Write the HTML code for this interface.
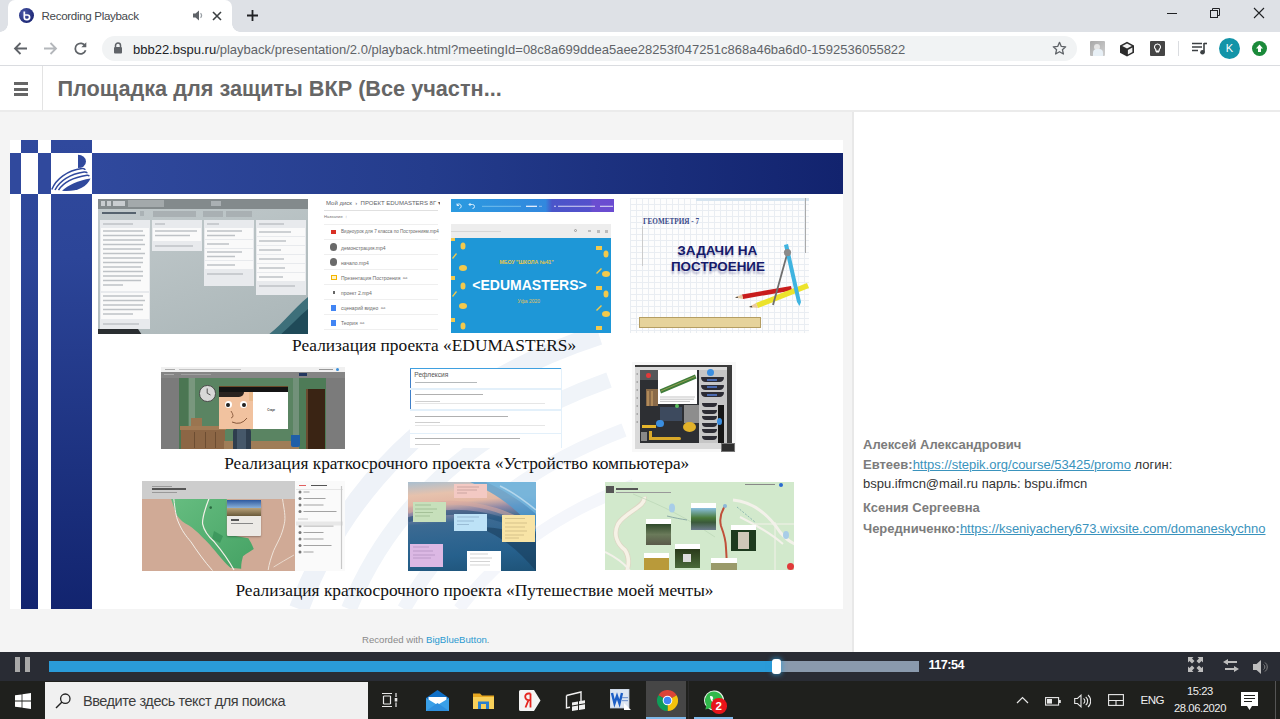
<!DOCTYPE html>
<html><head><meta charset="utf-8">
<style>
*{margin:0;padding:0;box-sizing:border-box}
html,body{width:1280px;height:719px;overflow:hidden;background:#fff;font-family:"Liberation Sans",sans-serif}
.a{position:absolute}
.t{position:absolute;white-space:nowrap;line-height:1}
</style></head><body>
<!-- TAB BAR -->
<div class="a" style="left:0;top:0;width:1280px;height:32px;background:#dee1e6"></div>
<div class="a" style="left:8px;top:0;width:224px;height:32px;background:#fff;border-radius:7px 7px 0 0"></div>
<div class="a" style="left:0;top:24px;width:8px;height:8px;background:radial-gradient(circle at 0 0,#dee1e6 7.5px,#fff 8px)"></div>
<div class="a" style="left:232px;top:24px;width:8px;height:8px;background:radial-gradient(circle at 100% 0,#dee1e6 7.5px,#fff 8px)"></div>
<!-- favicon -->
<div class="a" style="left:18.5px;top:7.8px;width:15px;height:15px;border-radius:50%;background:radial-gradient(circle at 35% 35%,#4a58a8,#1f2a78 70%)"></div>
<svg class="a" style="left:18.5px;top:7.8px" width="15" height="15" viewBox="0 0 15 15"><path d="M5.3 3.6V9.4a2.2 2.2 0 0 0 2.2 2.2h0.8a2.2 2.2 0 0 0 0-4.6H6" fill="none" stroke="#fff" stroke-width="1.7"/></svg>
<div class="t" style="left:41.5px;top:10.2px;font-size:11.6px;letter-spacing:-0.33px;color:#45484c">Recording Playback</div>
<!-- speaker -->
<svg class="a" style="left:192px;top:10px" width="12" height="11" viewBox="0 0 12 11"><path d="M1 3.5h2.5L7 0.5v10L3.5 7.5H1z" fill="#5f6368"/><path d="M8.5 3.2a3 3 0 0 1 0 4.6" stroke="#9aa0a6" stroke-width="1.3" fill="none"/></svg>
<!-- close -->
<svg class="a" style="left:212px;top:11px" width="10" height="10" viewBox="0 0 10 10"><path d="M1 1L9 9M9 1L1 9" stroke="#3c4043" stroke-width="1.6"/></svg>
<!-- plus -->
<svg class="a" style="left:246px;top:9px" width="13" height="13" viewBox="0 0 13 13"><path d="M6.5 1v11M1 6.5h11" stroke="#202124" stroke-width="1.8"/></svg>
<!-- window controls -->
<div class="a" style="left:1167px;top:13px;width:10px;height:1px;background:#202124"></div>
<svg class="a" style="left:1209px;top:7px" width="12" height="12" viewBox="0 0 12 12"><rect x="1.5" y="3.5" width="7" height="7" fill="none" stroke="#202124"/><path d="M3.5 3.5V1.5h7v7h-2" fill="none" stroke="#202124"/></svg>
<svg class="a" style="left:1253px;top:7px" width="12" height="12" viewBox="0 0 12 12"><path d="M1 1L11 11M11 1L1 11" stroke="#202124" stroke-width="1.1"/></svg>

<!-- TOOLBAR -->
<div class="a" style="left:0;top:32px;width:1280px;height:34px;background:#fff"></div>
<div class="a" style="left:0;top:65px;width:1280px;height:1px;background:#dadce0"></div>
<svg class="a" style="left:13px;top:41px" width="15" height="15" viewBox="0 0 15 15"><path d="M14 7.5H2M7.5 2L2 7.5L7.5 13" fill="none" stroke="#5f6368" stroke-width="1.8"/></svg>
<svg class="a" style="left:43px;top:41px" width="15" height="15" viewBox="0 0 15 15"><path d="M1 7.5H13M7.5 2L13 7.5L7.5 13" fill="none" stroke="#b4b7bb" stroke-width="1.8"/></svg>
<svg class="a" style="left:73px;top:41px" width="15" height="15" viewBox="0 0 15 15"><path d="M12.3 5.2A5.3 5.3 0 1 0 12.6 9.3" fill="none" stroke="#5f6368" stroke-width="1.8"/><path d="M13.3 1.2V6.2H8.3z" fill="#5f6368"/></svg>
<div class="a" style="left:102px;top:36px;width:975px;height:25px;border-radius:13px;background:#f1f3f4"></div>
<svg class="a" style="left:113px;top:42px" width="10" height="12" viewBox="0 0 10 12"><path d="M2.5 5V3.5a2.5 2.5 0 0 1 5 0V5" fill="none" stroke="#5f6368" stroke-width="1.5"/><rect x="1" y="5" width="8" height="6.5" rx="1" fill="#5f6368"/></svg>
<div class="t" style="left:133px;top:42.6px;font-size:13px;color:#202124">bbb22.bspu.ru<span style="color:#5f6368">/playback/presentation/2.0/playback.html?meetingId=08c8a699ddea5aee28253f047251c868a46ba6d0-1592536055822</span></div>
<svg class="a" style="left:1052px;top:41px" width="15" height="15" viewBox="0 0 15 15"><path d="M7.5 1.3l1.8 4.1 4.4 0.4-3.3 2.9 1 4.3-3.9-2.3-3.9 2.3 1-4.3-3.3-2.9 4.4-0.4z" fill="none" stroke="#5f6368" stroke-width="1.3" stroke-linejoin="round"/></svg>
<!-- extensions -->
<div class="a" style="left:1090px;top:41px;width:15px;height:15px;background:linear-gradient(135deg,#a8a8a8,#d0d0d0);border-radius:1px;overflow:hidden"><div class="a" style="left:4px;top:2.5px;width:6px;height:6px;border-radius:50%;background:#e6e6e6"></div><div class="a" style="left:3px;top:8px;width:10px;height:9px;border-radius:4px 4px 0 0;background:#e8f0f6"></div></div>
<svg class="a" style="left:1119px;top:41px" width="16" height="16" viewBox="0 0 16 16"><path d="M8 0.8L15 4.5V11.8L8 15.5L1 11.8V4.5z" fill="#2b2b2b"/><path d="M8 2.6L12.8 5L8 7.4L3.2 5z" fill="#f2f2f2"/><path d="M8.9 8.9L13.4 6.6V11L8.9 13.4z" fill="#f2f2f2"/></svg>
<div class="a" style="left:1150px;top:41px;width:15px;height:15px;background:#454545;border-radius:1px"></div>
<svg class="a" style="left:1150px;top:41px" width="15" height="15" viewBox="0 0 15 15"><path d="M7.5 3a3 3 0 0 1 1.7 5.5V10H5.8V8.5A3 3 0 0 1 7.5 3z M6 11h3" fill="none" stroke="#fff" stroke-width="1.1"/></svg>
<div class="a" style="left:1178px;top:41px;width:1px;height:15px;background:#dadce0"></div>
<svg class="a" style="left:1192px;top:42px" width="16" height="13" viewBox="0 0 16 13"><path d="M0 1.5h10M0 5h10M0 8.5h6" stroke="#3c4043" stroke-width="1.6"/><path d="M12 1v9" stroke="#3c4043" stroke-width="1.6"/><path d="M12 1.5h3" stroke="#3c4043" stroke-width="1.6"/><circle cx="10.5" cy="10.3" r="2.3" fill="#3c4043"/></svg>
<div class="a" style="left:1219px;top:38px;width:21px;height:21px;border-radius:50%;background:#1394a8"></div>
<div class="t" style="left:1219px;top:43px;width:21px;text-align:center;font-size:11px;color:#fff">K</div>
<div class="a" style="left:1252px;top:41px;width:15px;height:15px;border-radius:50%;background:#1b8a3a"></div>
<svg class="a" style="left:1252px;top:41px" width="15" height="15" viewBox="0 0 15 15"><path d="M7.5 3.5L11 7.5H9V11H6V7.5H4z" fill="#fff"/></svg>

<!-- BBB HEADER -->
<div class="a" style="left:0;top:66px;width:1280px;height:44px;background:#fff"></div>
<div class="a" style="left:0;top:110px;width:1280px;height:2px;background:#ebebeb"></div>
<div class="a" style="left:42px;top:66px;width:1px;height:44px;background:#e3e3e3"></div>
<div class="a" style="left:14px;top:82px;width:14px;height:3px;background:#666"></div>
<div class="a" style="left:14px;top:87.5px;width:14px;height:3px;background:#666"></div>
<div class="a" style="left:14px;top:93px;width:14px;height:3px;background:#666"></div>
<div class="t" style="left:57.5px;top:78px;font-size:21.7px;font-weight:bold;color:#666">Площадка для защиты ВКР (Все участн...</div>

<!-- CONTENT -->
<div class="a" style="left:0;top:112px;width:853px;height:540px;background:#f4f4f4"></div>
<div class="a" style="left:852px;top:112px;width:2px;height:540px;background:#e8e8e8"></div>
<div class="a" style="left:854px;top:112px;width:426px;height:540px;background:#fff"></div>

<!-- SLIDE -->
<div class="a" style="left:9.5px;top:140px;width:833px;height:469px;background:#fff"></div>
<!-- faint watermark swoosh -->
<svg class="a" style="left:9px;top:140px" width="834" height="469" viewBox="0 0 834 469">
<g fill="none">
<path d="M290 469 C 330 360, 420 250, 590 195" stroke="#eef2f8" stroke-width="20"/>
<path d="M340 469 C 380 370, 460 290, 600 240" stroke="#f0f4f9" stroke-width="16"/>
<path d="M395 469 C 440 390, 510 330, 615 290" stroke="#f2f5fa" stroke-width="14"/>
<path d="M450 469 C 495 410, 555 370, 625 345" stroke="#f4f6fb" stroke-width="12"/>
</g>
</svg>
<!-- blue band -->
<div class="a" style="left:91px;top:152.5px;width:751.5px;height:41px;background:linear-gradient(to right,#30499d,#243c8c 45%,#12236e)"></div>
<div class="a" style="left:9.5px;top:152.5px;width:11.5px;height:41px;background:#30499d"></div>
<div class="a" style="left:38px;top:152.5px;width:12.5px;height:41px;background:#30499d"></div>
<!-- columns -->
<div class="a" style="left:21px;top:140px;width:17px;height:469px;background:linear-gradient(to bottom,#30499d,#2c4598 25%,#12246f)"></div>
<div class="a" style="left:50.5px;top:140px;width:41px;height:469px;background:linear-gradient(to bottom,#30499d,#2c4598 25%,#12246f)"></div>
<div class="a" style="left:21px;top:152.5px;width:17px;height:41px;background:#fff"></div>
<div class="a" style="left:50.5px;top:152.5px;width:41px;height:41px;background:#fff"></div>
<!-- logo -->
<svg class="a" style="left:50px;top:152px" width="42" height="42" viewBox="0 0 42 42">
<path d="M28 2.7 A8 6.7 0 0 1 28 16.1 Z" fill="#30499d"/>
<path d="M1.8 37.5 C 6 27, 17 18.5, 32 16.5 C 34 16.3, 35 17, 35 18" fill="none" stroke="#30499d" stroke-width="1.5"/>
<path d="M5 38 C 9.5 29, 20 22, 34 20 C 36 19.8, 37 20.5, 37 21.3" fill="none" stroke="#30499d" stroke-width="1.5"/>
<path d="M8.5 38.2 C 13 31, 23 25.5, 37 23.3 C 38.5 23.1, 39 23.5, 39.2 24.3" fill="none" stroke="#30499d" stroke-width="1.5"/>
<path d="M12 38.8 C 18 33, 28 28.5, 40.5 26.5 C 37 35.5, 26 40, 12 38.8 Z" fill="#30499d"/>
</svg>
<!-- IMG1 trello -->
<div class="a" style="left:98px;top:198.5px;width:210px;height:135.5px;background:linear-gradient(160deg,#c3cbcd,#b4bec0 60%,#aab6b8);overflow:hidden">
 <div class="a" style="left:0;top:0;width:210px;height:10px;background:#838a8c"></div>
 <div class="a" style="left:3px;top:2.5px;width:4px;height:5px;background:#c9cdd0"></div>
 <div class="a" style="left:9px;top:2.5px;width:4px;height:5px;background:#c9cdd0"></div>
 <div class="a" style="left:15px;top:2.5px;width:12px;height:5px;background:#c9cdd0"></div>
 <div class="a" style="left:30px;top:1.2px;width:36px;height:7.5px;background:#a3a9ab"></div>
 <div class="a" style="left:113px;top:2.5px;width:10px;height:5px;background:#aab0b3"></div>
 <div class="a" style="left:4px;top:13.8px;width:34px;height:2.2px;background:#56636f"></div>
 <div class="a" style="left:42px;top:12.5px;width:4px;height:5px;background:#aab2b5"></div>
 <div class="a" style="left:55px;top:12px;width:43px;height:6px;background:#a9b0b3"></div>
 <div class="a" style="left:105px;top:12px;width:20px;height:6px;background:#a9b0b3"></div>
 <div class="a" style="left:128px;top:12px;width:26px;height:6px;background:#a9b0b3"></div>
 <!-- lists -->
 <div class="a" style="left:1.5px;top:21.5px;width:50px;height:108.5px;background:#e8eaed"></div>
 <div class="a" style="left:2.5px;top:29px;width:48px;height:63px;background:#fafafa"></div>
 <div class="a" style="left:2.5px;top:94px;width:48px;height:26px;background:#fafafa"></div>
 <div class="a" style="left:53.5px;top:21.5px;width:50px;height:31px;background:#e8eaed"></div>
 <div class="a" style="left:54.5px;top:29px;width:48px;height:13px;background:#fafafa"></div>
 <div class="a" style="left:105.5px;top:21.5px;width:50px;height:66px;background:#e8eaed"></div>
 <div class="a" style="left:106.5px;top:29px;width:48px;height:11px;background:#fafafa"></div>
 <div class="a" style="left:106.5px;top:41px;width:48px;height:8px;background:#fafafa"></div>
 <div class="a" style="left:106.5px;top:50px;width:48px;height:11px;background:#fafafa"></div>
 <div class="a" style="left:106.5px;top:62px;width:48px;height:8px;background:#fafafa"></div>
 <div class="a" style="left:157.5px;top:21.5px;width:50px;height:75px;background:#e8eaed"></div>
 <div class="a" style="left:158.5px;top:29px;width:48px;height:8px;background:#fafafa"></div>
 <div class="a" style="left:158.5px;top:38px;width:48px;height:8px;background:#fafafa"></div>
 <div class="a" style="left:158.5px;top:47px;width:48px;height:8px;background:#fafafa"></div>
 <div class="a" style="left:158.5px;top:56px;width:48px;height:8px;background:#fafafa"></div>
 <div class="a" style="left:158.5px;top:65px;width:48px;height:8px;background:#fafafa"></div>
 <div class="a" style="left:158.5px;top:74px;width:48px;height:8px;background:#fafafa"></div>
 <!-- text hint lines -->
 <svg class="a" style="left:0;top:0" width="210" height="136" viewBox="0 0 210 136">
  <g stroke="#bec2c6" stroke-width="1.5">
   <path d="M5 25h30M5 32h40M5 36.5h42M5 41h40M5 45.5h42M5 50h38M5 54.5h42M5 59h40M5 63.5h40M5 68h38M5 72.5h40M5 77h40M5 81.5h38M5 86h20"/>
   <path d="M5 97h40M5 101.5h42M5 106h40M5 110.5h40M5 115h30M5 125h36"/>
   <path d="M57 25h10M57 32h42M57 36.5h35M57 47h38"/>
   <path d="M109 25h12M109 32h35M109 36.5h28M109 45h22M109 53h35M109 57.5h28M109 66h28M109 75h36"/>
   <path d="M161 25h25M161 33h32M161 42h27M161 51h22M161 60h25M161 69h26M161 78h24M161 87h36"/>
  </g>
 </svg>
 <!-- mountain -->
 <svg class="a" style="left:0;top:0" width="210" height="136" viewBox="0 0 210 136">
  <path d="M170 136 C 185 125, 195 110, 210 98 V136z" fill="#3d6f7a"/>
  <path d="M182 136 C 192 128, 200 118, 210 110 V136z" fill="#1f4a58"/>
  <path d="M0 130 H40 L44 136 H0z" fill="#2a2e31"/>
 </svg>
</div>

<!-- IMG2 drive -->
<div class="a" style="left:320px;top:198px;width:120px;height:136px;overflow:hidden">
 <div class="t" style="left:6px;top:1.5px;font-size:6px;color:#5f6368">Мой диск &nbsp;›&nbsp; ПРОЕКТ EDUMASTERS 8Г ▾</div>
 <div class="a" style="left:4px;top:11.5px;width:114px;height:0.6px;background:#e0e0e0"></div>
 <div class="t" style="left:4px;top:17px;font-size:4.2px;color:#777">Название &nbsp;↑</div>
 <div class="a" style="left:4px;top:26px;width:114px;height:0.6px;background:#efefef"></div>
 <div class="a" style="left:11px;top:31.5px;width:5px;height:4px;background:#d93025"></div>
 <div class="t" style="left:21px;top:32.3px;font-size:4.6px;color:#6a6a6a">Видеоурок для 7 класса по Построениям.mp4</div>
 <div class="a" style="left:4px;top:41px;width:114px;height:0.6px;background:#efefef"></div>
 <div class="a" style="left:9.5px;top:45px;width:7.5px;height:7.5px;border-radius:50%;background:#6a6a6a"></div>
 <div class="t" style="left:21px;top:47.5px;font-size:5px;color:#6a6a6a">демонстрация.mp4</div>
 <div class="a" style="left:4px;top:56px;width:114px;height:0.6px;background:#efefef"></div>
 <div class="a" style="left:9.5px;top:60px;width:7.5px;height:7.5px;border-radius:50%;background:#6a6a6a"></div>
 <div class="t" style="left:21px;top:62.5px;font-size:5px;color:#6a6a6a">начало.mp4</div>
 <div class="a" style="left:4px;top:71px;width:114px;height:0.6px;background:#efefef"></div>
 <div class="a" style="left:11px;top:77px;width:6px;height:5px;border:1px solid #f4b400;background:#fff3c4"></div>
 <div class="t" style="left:21px;top:77.5px;font-size:5px;color:#6a6a6a">Презентация Построения &nbsp;⚯</div>
 <div class="a" style="left:4px;top:86px;width:114px;height:0.6px;background:#efefef"></div>
 <div class="a" style="left:13px;top:93px;width:2px;height:3px;background:#666"></div>
 <div class="t" style="left:21px;top:92.5px;font-size:5px;color:#6a6a6a">проект 2.mp4</div>
 <div class="a" style="left:4px;top:101px;width:114px;height:0.6px;background:#efefef"></div>
 <div class="a" style="left:11px;top:107px;width:5px;height:6px;background:#4285f4"></div>
 <div class="t" style="left:21px;top:107.5px;font-size:5px;color:#6a6a6a">сценарий видео &nbsp;⚯</div>
 <div class="a" style="left:4px;top:116px;width:114px;height:0.6px;background:#efefef"></div>
 <div class="a" style="left:11px;top:122px;width:5px;height:6px;background:#4285f4"></div>
 <div class="t" style="left:21px;top:122.5px;font-size:5px;color:#6a6a6a">Теория &nbsp;⚯</div>
 <div class="a" style="left:4px;top:131px;width:114px;height:0.6px;background:#efefef"></div>
</div>
<!-- IMG3 canva -->
<div class="a" style="left:450.5px;top:198.8px;width:163px;height:13.7px;background:linear-gradient(to right,#2b9be0,#3288de 58%,#4a55c9 62%,#5450cc 85%,#6a4dd0 87%,#6a4bd1)"></div>
<svg class="a" style="left:450.5px;top:198.8px" width="163" height="14" viewBox="0 0 163 14">
 <path d="M8.5 9.5a2.3 2.3 0 1 0 -2.5 -3.5M6 4.5v2h2" fill="none" stroke="#e6f4ff" stroke-width="0.9"/>
 <path d="M18 5.5h3.5a2 2 0 0 1 0 4M19.5 4l-1.5 1.5 1.5 1.5" fill="none" stroke="#e6f4ff" stroke-width="0.9"/>
 <path d="M31 7.3h39" stroke="#7cc4ee" stroke-width="0.9"/>
 <path d="M75 7.3h11" stroke="#f4f8ff" stroke-width="1.2"/>
 <path d="M88 7.3h3" stroke="#a9c8f0" stroke-width="0.8"/>
 <path d="M103 7.3h2M107 7.3h37" stroke="#d6d8f4" stroke-width="1.1"/>
 <path d="M149 7.3h13" stroke="#dcd8f4" stroke-width="1.1"/>
</svg>
<div class="a" style="left:450.5px;top:224.4px;width:160.5px;height:14px;background:#ededed"></div>
<div class="a" style="left:451px;top:231px;width:50px;height:1px;background:#d6d6d6"></div>
<div class="a" style="left:574px;top:229px;width:3px;height:3px;border:0.6px solid #999;border-radius:50%"></div><div class="a" style="left:588px;top:230px;width:3px;height:2px;background:#bbb"></div><div class="a" style="left:597px;top:229.5px;width:3px;height:3px;background:#bbb"></div><div class="a" style="left:605px;top:229.5px;width:3px;height:3px;background:#bbb"></div>
<div class="a" style="left:450.5px;top:238.4px;width:160.5px;height:94.6px;background:#1e97d7;overflow:hidden">
 <svg class="a" style="left:0;top:0" width="161" height="95" viewBox="0 0 161 95">
  <g fill="#f2c94c">
   <ellipse cx="12" cy="8" rx="2.5" ry="3.5"/><ellipse cx="12" cy="30" rx="4" ry="3"/><ellipse cx="12" cy="48" rx="2.5" ry="3.5"/><ellipse cx="12" cy="68" rx="4" ry="3"/><ellipse cx="12" cy="88" rx="2.5" ry="3.5"/>
   <rect x="0" y="0" width="4" height="3"/><rect x="0" y="38" width="4" height="4"/><rect x="0" y="80" width="4" height="4"/>
   <path d="M1 20l4 -5 1 1 -4 5z"/><path d="M1 58l4 -5 1 1 -4 5z"/>
   <rect x="145" y="8" width="6" height="4"/><ellipse cx="155" cy="16" rx="2.5" ry="3.5"/><path d="M145 35l5 -5 1 1 -5 5z"/><ellipse cx="155" cy="36" rx="4" ry="3"/>
   <rect x="145" y="48" width="6" height="4"/><ellipse cx="155" cy="56" rx="2.5" ry="3.5"/><path d="M145 72l5 -5 1 1 -5 5z"/><ellipse cx="155" cy="76" rx="4" ry="3"/><rect x="145" y="88" width="6" height="4"/>
  </g>
 </svg>
 <div class="t" style="left:49px;top:22px;font-size:5.2px;font-weight:bold;color:#e9c84a">МБОУ "ШКОЛА №41"</div>
 <div class="t" style="left:21.8px;top:39.2px;font-size:14px;font-weight:bold;color:#fff">&lt;EDUMASTERS&gt;</div>
 <div class="t" style="left:67px;top:61px;font-size:5px;color:#e2c35a">Уфа 2020</div>
</div>

<!-- IMG4 geometry -->
<div class="a" style="left:629.5px;top:198px;width:179px;height:135px;background-color:#fdfdfd;background-image:linear-gradient(#e9edf2 0.6px,transparent 0.6px),linear-gradient(90deg,#e9edf2 0.6px,transparent 0.6px);background-size:6px 6px;overflow:hidden">
 <div class="a" style="left:66px;top:0;width:113px;height:2.5px;background:#d6e4ef"></div>
 <div class="a" style="left:175px;top:0;width:0.7px;height:55px;background:#aaa"></div>
 <div class="a" style="left:12px;top:28px;width:0.6px;height:40px;background:#ccc"></div>
 <div class="t" style="left:13.5px;top:20.5px;font-family:'Liberation Serif',serif;font-size:7.2px;font-weight:bold;color:#3a4a8a">ГЕОМЕТРИЯ - 7</div>
 <div class="t" style="left:47.8px;top:46px;font-size:13.6px;font-weight:bold;color:#161a6a;text-shadow:0 2px 1.5px rgba(22,26,106,.25)">ЗАДАЧИ НА</div>
 <div class="t" style="left:41.5px;top:61.8px;font-size:13.4px;font-weight:bold;color:#161a6a;text-shadow:0 3px 2px rgba(22,26,106,.3)">ПОСТРОЕНИЕ</div>
 <svg class="a" style="left:0;top:0" width="179" height="135" viewBox="0 0 179 135">
  <path d="M112 96.5 L161 88 L162 92.5 L113 101z" fill="#c81d1d"/>
  <path d="M105 99.5 L112 96.5 L113 101z" fill="#e9c9a0"/><path d="M105 99.5 L107.5 98.5 L108 100z" fill="#333"/>
  <path d="M126 105 L177 85 L179 90 L128 110z" fill="#ece32c"/>
  <path d="M119 109 L126 105 L128 110z" fill="#e9c9a0"/><path d="M119 109 L121.5 107.8 L122.5 109.5z" fill="#333"/>
  <path d="M157.5 54.6 L143 107" stroke="#6f6f6f" stroke-width="1.8"/>
  <path d="M154 47 L158 46 L171 104 L169.5 108 L167 104z" fill="#3fb4e0"/>
  <circle cx="157.5" cy="54.6" r="3.6" fill="#8a8a8a"/>
 </svg>
 <div class="a" style="left:9.5px;top:118.5px;width:122px;height:11.5px;background:#e6d39b;border:0.6px solid #b59e62"></div>
</div>

<div class="t" style="left:292px;top:336.9px;font-family:'Liberation Serif',serif;font-size:17.35px;color:#111">Реализация проекта «EDUMASTERS»</div>
<!-- IMG5 cartoon -->
<div class="a" style="left:161.2px;top:367.3px;width:184px;height:81.5px;background:#7b7b7b;overflow:hidden">
 <div class="a" style="left:0;top:0;width:184px;height:4.8px;background:#f0f0f0"></div>
 <div class="a" style="left:4px;top:2px;width:10px;height:1px;background:#aaa"></div>
 <div class="a" style="left:18px;top:1.8px;width:62px;height:1.2px;background:#c4c4c4"></div>
 <div class="a" style="left:158px;top:2px;width:14px;height:1px;background:#999"></div>
 <div class="a" style="left:175px;top:1.2px;width:3px;height:3px;border-radius:50%;background:#3b8ed8"></div>
 <div class="a" style="left:0;top:4.8px;width:184px;height:5.8px;background:#858585"></div>
 <div class="a" style="left:3px;top:6.8px;width:10px;height:1.2px;background:#aaa"></div>
 <div class="a" style="left:20px;top:6.8px;width:30px;height:1.2px;background:#a0a0a0"></div>
 <div class="a" style="left:138px;top:6px;width:8px;height:3px;background:#23375f"></div>
 <div class="a" style="left:18px;top:10.6px;width:147px;height:71px;background:#5a8462"></div>
 <div class="a" style="left:18px;top:10.6px;width:9px;height:71px;background:#4b7653"></div>
 <div class="a" style="left:27.5px;top:10.6px;width:6.5px;height:60px;background:#79977e"></div>
 <div class="a" style="left:131.5px;top:10.6px;width:6.5px;height:60px;background:#72917a"></div>
 <div class="a" style="left:138px;top:10.6px;width:27px;height:71px;background:#4e7b57"></div>
 <div class="a" style="left:38px;top:18px;width:16.4px;height:16.4px;border-radius:50%;background:#d8d8d8;border:1.6px solid #4a4a4a"></div>
 <svg class="a" style="left:38px;top:18px" width="17" height="17" viewBox="0 0 17 17"><path d="M8.2 3.5V8.2L11.5 10" stroke="#444" stroke-width="0.9" fill="none"/></svg>
 <div class="a" style="left:57.7px;top:19.7px;width:69px;height:5px;background:#141414"></div>
 <div class="a" style="left:57.7px;top:18.8px;width:69px;height:1.2px;background:#6b4a2a"></div>
 <div class="a" style="left:19px;top:58.5px;width:46px;height:4px;background:#a27b55"></div>
 <div class="a" style="left:20px;top:62.5px;width:44px;height:19px;background:#8c6645"></div>
 <div class="a" style="left:33px;top:65px;width:0.8px;height:16px;background:#6d4d32"></div>
 <div class="a" style="left:44px;top:65px;width:0.8px;height:16px;background:#6d4d32"></div>
 <div class="a" style="left:54px;top:65px;width:0.8px;height:16px;background:#6d4d32"></div>
 <div class="a" style="left:30px;top:51px;width:11px;height:8px;background:#9a7550"></div>
 <div class="a" style="left:63px;top:74px;width:75px;height:7.5px;background:#9f7d58"></div>
 <div class="a" style="left:72px;top:61px;width:18px;height:20.5px;background:#2f3e4e;border-radius:4px 4px 0 0"></div>
 <div class="a" style="left:76px;top:61px;width:9px;height:20.5px;background:#46586a"></div>
 <div class="a" style="left:130px;top:67.8px;width:9px;height:11.5px;background:#1f5fa8;border-radius:0 0 2px 2px"></div>
 <div class="a" style="left:57.7px;top:24.6px;width:34.5px;height:37px;background:#f1c29f"></div>
 <div class="a" style="left:57.7px;top:24.6px;width:25px;height:5.5px;background:#2a2320;border-radius:0 0 14px 0"></div>
 <div class="a" style="left:88px;top:24.6px;width:4.2px;height:9px;background:#e8b88a"></div>
 <div class="a" style="left:63.5px;top:34px;width:7px;height:7px;border-radius:50%;background:#fff"></div>
 <div class="a" style="left:65.3px;top:35.6px;width:3.6px;height:4px;border-radius:50%;background:#222"></div>
 <div class="a" style="left:79px;top:34px;width:7px;height:7px;border-radius:50%;background:#fff"></div>
 <div class="a" style="left:80.8px;top:35.6px;width:3.6px;height:4px;border-radius:50%;background:#222"></div>
 <svg class="a" style="left:57.7px;top:24.6px" width="36" height="37" viewBox="0 0 36 37"><path d="M12 19 Q 16 25 12 26" fill="none" stroke="#6a3b20" stroke-width="0.7"/><path d="M13 30 Q 22 34 28 26" fill="none" stroke="#6a3b20" stroke-width="0.8"/></svg>
 <div class="a" style="left:92.2px;top:24.6px;width:34.4px;height:37px;background:#fff"></div>
 <div class="t" style="left:106px;top:41.5px;font-size:2.8px;font-weight:bold;color:#333">Старт</div>
 <div class="a" style="left:146.3px;top:21.5px;width:18px;height:60px;background:#3a2414"></div>
 <div class="a" style="left:144.8px;top:21.5px;width:1.6px;height:60px;background:#6b4b30"></div>
</div>

<!-- IMG6 forms -->
<div class="a" style="left:409.5px;top:367.8px;width:152.5px;height:80.6px;background:#e3f0fa;overflow:hidden">
 <div class="a" style="left:0.5px;top:0;width:151px;height:1.6px;background:#3fa0e0"></div>
 <div class="a" style="left:0.5px;top:1.2px;width:151px;height:19.5px;background:#fff"></div>
 <div class="a" style="left:0.5px;top:1.2px;width:0.8px;height:19.5px;background:#3f7fc8"></div>
 <div class="t" style="left:4.8px;top:4.6px;font-size:6.6px;color:#555">Рефлексия</div>
 <div class="a" style="left:5px;top:14.3px;width:62px;height:0.7px;background:#b5b9bb"></div>
 <div class="a" style="left:0.5px;top:22.3px;width:151px;height:19.3px;background:#fff"></div>
 <div class="a" style="left:0.5px;top:22.3px;width:0.8px;height:19.3px;background:#3f7fc8"></div>
 <div class="a" style="left:5px;top:26.5px;width:68px;height:0.8px;background:#b0b0b0"></div>
 <div class="a" style="left:5px;top:33px;width:25px;height:0.7px;background:#cfcfcf"></div>
 <div class="a" style="left:5px;top:35.5px;width:130px;height:0.5px;background:#e6e6e6"></div>
 <div class="a" style="left:0.5px;top:43.6px;width:151px;height:21.3px;background:#fff"></div>
 <div class="a" style="left:5px;top:48px;width:93px;height:0.8px;background:#b0b0b0"></div>
 <div class="a" style="left:5px;top:54px;width:25px;height:0.7px;background:#cfcfcf"></div>
 <div class="a" style="left:5px;top:57px;width:130px;height:0.5px;background:#e6e6e6"></div>
 <div class="a" style="left:0.5px;top:65.8px;width:151px;height:15px;background:#fff"></div>
 <div class="a" style="left:5px;top:70px;width:105px;height:0.8px;background:#b0b0b0"></div>
 <div class="a" style="left:5px;top:76px;width:25px;height:0.7px;background:#cfcfcf"></div>
</div>

<!-- IMG7 computer -->
<div class="a" style="left:632px;top:362px;width:104px;height:90px;background:#f8f8f8"></div>
<div class="a" style="left:635.3px;top:364.5px;width:96.5px;height:84px;background:#d9d9d9;overflow:hidden">
 <div class="a" style="left:0;top:0;width:96px;height:2.6px;background:#3b3b3b"></div>
 <div class="a" style="left:92px;top:0;width:4.5px;height:84px;background:#3b3b3b"></div>
 <svg class="a" style="left:0;top:0" width="5" height="84" viewBox="0 0 5 84"><g fill="#aaa"><rect x="1.5" y="8" width="1.5" height="2"/><rect x="1.5" y="16" width="1.5" height="2"/><rect x="1.5" y="24" width="1.5" height="2"/><rect x="1.5" y="32" width="1.5" height="2"/><rect x="1.5" y="40" width="1.5" height="2"/><rect x="1.5" y="48" width="1.5" height="2"/><rect x="1.5" y="56" width="1.5" height="2"/></g></svg>
 <div class="a" style="left:4.4px;top:5px;width:59px;height:73.8px;background:#2d2f33"></div>
 <div class="a" style="left:4.4px;top:5px;width:18px;height:10px;background:#55575a"></div>
 <div class="a" style="left:11px;top:8.7px;width:4.4px;height:4.4px;border-radius:50%;background:#e23a3a"></div>
 <div class="a" style="left:10.7px;top:24px;width:12px;height:17.5px;background:#8a6a48"></div>
 <div class="a" style="left:12px;top:26px;width:2px;height:15px;background:#b08a5a"></div>
 <div class="a" style="left:16px;top:26px;width:2px;height:15px;background:#b08a5a"></div>
 <div class="a" style="left:25px;top:42px;width:22px;height:14px;background:#3d4a5e"></div>
 <div class="a" style="left:48.7px;top:40px;width:14.8px;height:18px;background:#8d8d8d"></div>
 <div class="a" style="left:6.6px;top:60.5px;width:14.6px;height:3px;background:#e5b52c"></div>
 <div class="a" style="left:21.2px;top:55.5px;width:7.2px;height:7.2px;border-radius:50%;background:#3a8ee0"></div>
 <div class="a" style="left:39.5px;top:39.3px;width:4.4px;height:4.4px;border-radius:50%;background:#5bc060"></div>
 <div class="a" style="left:47.5px;top:57.5px;width:13px;height:10px;border-radius:50%;background:#e2b22a"></div>
 <div class="a" style="left:13.7px;top:72.3px;width:32px;height:3.5px;background:#d9a92a;border-radius:2px"></div>
 <div class="a" style="left:13.7px;top:66px;width:3px;height:9px;background:#d9a92a"></div>
 <div class="a" style="left:6px;top:67px;width:6px;height:9px;background:#888"></div>
 <div class="a" style="left:22.4px;top:5.8px;width:39.4px;height:33.6px;background:#fff"></div>
 <svg class="a" style="left:22.4px;top:5.8px" width="40" height="34" viewBox="0 0 40 34"><path d="M1.7 19.5 L37 4.5 L38.5 8.5 L3 23.5z" fill="#3e7c3a"/><path d="M3 21 L37 6.5" stroke="#c9b25a" stroke-width="0.6"/><path d="M2 27h35M2 29.2h34M2 31.4h30" stroke="#9a9a9a" stroke-width="0.6"/></svg>
 <div class="a" style="left:63.5px;top:5px;width:28.5px;height:73.8px;background:#c6c6c6"></div>
 <div class="a" style="left:65.7px;top:12.4px;width:23.4px;height:5px;background:#2c2c34;border-radius:1px 1px 8px 8px"></div>
 <div class="a" style="left:65.7px;top:20px;width:23.4px;height:5px;background:#2c2c34;border-radius:1px 1px 8px 8px"></div>
 <div class="a" style="left:65.7px;top:27.6px;width:23.4px;height:5px;background:#2c2c34;border-radius:1px 1px 8px 8px"></div>
 <div class="a" style="left:72px;top:14px;width:10px;height:2px;background:#4a6ab0"></div>
 <div class="a" style="left:72px;top:21.6px;width:10px;height:2px;background:#4a6ab0"></div>
 <div class="a" style="left:72px;top:29.2px;width:10px;height:2px;background:#4a6ab0"></div>
 <div class="a" style="left:71.7px;top:4px;width:7px;height:7px;border-radius:50%;background:#3a8ee0"></div>
 <div class="a" style="left:67.2px;top:38.5px;width:14.5px;height:4px;background:#2c2c34;border-radius:0 0 6px 6px"></div>
 <div class="a" style="left:67.2px;top:45px;width:14.5px;height:4px;background:#2c2c34;border-radius:0 0 6px 6px"></div>
 <div class="a" style="left:67.2px;top:51.5px;width:14.5px;height:4px;background:#2c2c34;border-radius:0 0 6px 6px"></div>
 <div class="a" style="left:67.2px;top:58px;width:14.5px;height:4px;background:#2c2c34;border-radius:0 0 6px 6px"></div>
 <div class="a" style="left:67.2px;top:64.5px;width:14.5px;height:4px;background:#2c2c34;border-radius:0 0 6px 6px"></div>
 <div class="a" style="left:67.2px;top:71px;width:14.5px;height:4px;background:#2c2c34;border-radius:0 0 6px 6px"></div>
 <div class="a" style="left:82.5px;top:40px;width:5.8px;height:38px;background:#161616"></div>
 <div class="a" style="left:81.5px;top:53px;width:5px;height:7px;border-radius:50%;background:#3a8ee0"></div>
</div>
<div class="a" style="left:720.7px;top:442.6px;width:14.6px;height:9.4px;background:#2e2e2e;border:0.8px solid #777"></div>

<div class="t" style="left:224.2px;top:454.9px;font-family:'Liberation Serif',serif;font-size:17.35px;color:#111">Реализация краткосрочного проекта «Устройство компьютера»</div>
<!-- IMG8 map -->
<div class="a" style="left:142.2px;top:481.1px;width:152.8px;height:89.9px;background:#d0a994;overflow:hidden">
 <svg class="a" style="left:0;top:0" width="153" height="90" viewBox="0 0 153 90">
  <defs><linearGradient id="gg" x1="0" y1="0" x2="1" y2="1"><stop offset="0" stop-color="#66bd80"/><stop offset="1" stop-color="#45a264"/></linearGradient></defs>
  <rect x="0" y="0" width="153" height="90" fill="#d0aa96"/>
  <path d="M29 17.7 L 34.5 33.8 C 38 39, 42 42, 47 44.6 C 55 50, 60 56, 65 60.8 C 69 65, 72 69, 76 73.4 C 80 78, 84 83, 88.4 86.8 L 99.2 87.7 C 99 83, 100 79, 101 75.2 C 105 72, 109 70, 111.8 68 C 110 63, 108 60, 106.4 57.2 L 84.8 53.6 L 84.8 17.7 Z" fill="url(#gg)"/>
  <path d="M72 50 L 81 55 L 78 62 L 70 58z" fill="#2f8a52" opacity=".6"/>
  <circle cx="68.7" cy="26.6" r="1.3" fill="#2a6a40"/>
  <path d="M31.8 17.7 C 33 28, 34 36, 36.3 41 C 40 50, 44 55, 48.9 60.8 C 55 70, 62 80, 70.5 89.5" fill="none" stroke="#f3efe8" stroke-width="1"/>
  <path d="M66.9 17.7 C 63 28, 60 36, 60.6 42.8 C 62 50, 67 56, 72.3 60.8 C 80 70, 86 78, 92 89" fill="none" stroke="#f3efe8" stroke-width="1.2"/>
  <path d="M140.5 17.7 C 142 28, 144 36, 142.3 42.8 C 140 55, 135 62, 131.6 69.8 C 129 77, 127 83, 126.2 89" fill="none" stroke="#efe4da" stroke-width="1"/>
  <path d="M152 74 C 145 78, 138 82, 131.6 86" fill="none" stroke="#efe4da" stroke-width="0.8"/>
 </svg>
<div class="a" style="left:0;top:0;width:153px;height:17.7px;background:#cdcdcd"></div>
 <div class="a" style="left:10px;top:4.5px;width:20px;height:0.8px;background:#999"></div>
 <div class="a" style="left:10px;top:7px;width:34px;height:2.2px;background:#555"></div>
 <div class="a" style="left:10px;top:11px;width:25px;height:0.8px;background:#999"></div>
 <div class="a" style="left:85px;top:18.5px;width:34px;height:36px;background:#eceae6;border-radius:1px;box-shadow:0 1px 2px rgba(0,0,0,.3)"></div>
 <div class="a" style="left:85px;top:18.5px;width:34px;height:8px;background:linear-gradient(#2e5aa0,#8ab0d8)"></div>
 <div class="a" style="left:85px;top:26.5px;width:34px;height:8px;background:linear-gradient(#b9a27a,#6a5a3a)"></div>
 <div class="a" style="left:89px;top:38px;width:8px;height:1.5px;background:#555"></div>
 <div class="a" style="left:89px;top:42px;width:22px;height:1px;background:#888"></div>
</div>
<div class="a" style="left:295px;top:481.1px;width:49.7px;height:89.9px;background:#fafafa;overflow:hidden">
 <div class="a" style="left:4px;top:4px;width:7px;height:1px;background:#e06060"></div>
 <div class="a" style="left:16px;top:4px;width:16px;height:1.2px;background:#555"></div>
 <div class="a" style="left:1px;top:8px;width:47px;height:0.6px;background:#e6e6e6"></div>
 <svg class="a" style="left:0;top:0" width="50" height="90" viewBox="0 0 50 90">
  <g fill="#777"><circle cx="5" cy="11" r="1.5"/><circle cx="5" cy="17.5" r="1.5"/><circle cx="5" cy="24" r="1.5"/><circle cx="5" cy="30.5" r="1.5"/><circle cx="5" cy="45" r="1.5"/><circle cx="5" cy="51.5" r="1.5"/><circle cx="5" cy="58" r="1.5"/><circle cx="5" cy="64.5" r="1.5"/><circle cx="5" cy="71" r="1.5"/></g>
  <g stroke="#999" stroke-width="0.9"><path d="M8.5 11h6M8.5 17.5h22M8.5 24h20M8.5 30.5h33M8.5 45h30M8.5 51.5h20M8.5 58h20M8.5 64.5h28M8.5 71h10"/></g>
  <path d="M3 38h10" stroke="#bbb" stroke-width="0.8"/>
  <path d="M1 42.5h47" stroke="#e8e8e8" stroke-width="4"/>
  <path d="M46.5 5v83" stroke="#c8c8c8" stroke-width="1.2"/>
 </svg>
</div>

<!-- IMG9 padlet -->
<div class="a" style="left:408.4px;top:482.3px;width:127.6px;height:88.7px;overflow:hidden;background:linear-gradient(175deg,#a9bfd0 0%,#e6c2ad 14%,#e3b7a4 24%,#8e88a6 33%,#3c6a92 44%,#2f6590 62%,#26608c 78%,#1e5378 100%)">
 <svg class="a" style="left:0;top:0" width="128" height="89" viewBox="0 0 128 89">
  <path d="M62 0 C 85 10, 108 25, 128 50 V0z" fill="#4f9fd4" opacity=".75"/>
  <path d="M78 0 C 95 8, 112 18, 128 32 V0z" fill="#7cc0e6" opacity=".6"/>
  <path d="M92 4 C 105 10, 118 20, 128 28" fill="none" stroke="#cfe6f4" stroke-width="1.5" opacity=".7"/>
  <path d="M0 30 C 25 18, 55 18, 88 28 C 100 32, 115 38, 128 46" fill="none" stroke="#d9a9a0" stroke-width="4" opacity=".55"/>
  <path d="M0 38 C 30 28, 60 27, 95 38 C 108 43, 118 48, 128 55" fill="none" stroke="#1e4e78" stroke-width="5" opacity=".55"/>
  <path d="M70 45 C 95 55, 112 70, 128 89 V 60 C 110 50, 92 45, 70 45z" fill="#173a58" opacity=".55"/>
 </svg>
<div class="a" style="left:46px;top:1.5px;width:33px;height:14.5px;background:#f3c9c3"></div>
 <div class="a" style="left:4.2px;top:19.7px;width:33.2px;height:20px;background:#c7e0bb"></div>
 <div class="a" style="left:45.6px;top:31.7px;width:33px;height:16.6px;background:#bde2f7"></div>
 <div class="a" style="left:93.6px;top:33.2px;width:33px;height:27px;background:#f8e4a6"></div>
 <div class="a" style="left:1.6px;top:61.7px;width:33px;height:23px;background:#dcb8e4"></div>
 <div class="a" style="left:59.1px;top:68.7px;width:33.5px;height:20px;background:#fff"></div>
 <svg class="a" style="left:0;top:0" width="128" height="89" viewBox="0 0 128 89">
  <g stroke="#8a6a6a" stroke-width="0.6" opacity=".6"><path d="M49 5h22M49 8h20M49 11h10"/></g>
  <g stroke="#6a8a5a" stroke-width="0.6" opacity=".6"><path d="M7 23h16M7 27h22M7 30.5h18M7 34h15"/></g>
  <g stroke="#5a7a9a" stroke-width="0.6" opacity=".6"><path d="M49 35h22M49 39h17M49 42.5h12"/></g>
  <g stroke="#9a8a5a" stroke-width="0.6" opacity=".6"><path d="M97 36.5h20M97 41h22M97 45h20M97 49h22M97 53h19M97 56h14"/></g>
  <g stroke="#8a6a9a" stroke-width="0.6" opacity=".6"><path d="M5 65h16M5 69h20M5 73h22M5 76h18"/></g>
  <g stroke="#888" stroke-width="0.6" opacity=".6"><path d="M62 72h18M62 76h22M62 79.5h20M62 83h20"/></g>
 </svg>
</div>

<!-- IMG10 map2 -->
<div class="a" style="left:604.5px;top:482.3px;width:189.4px;height:88.1px;background:#d2e9cc;overflow:hidden">
 <svg class="a" style="left:0;top:0" width="190" height="89" viewBox="0 0 190 89">
  <path d="M39 15 C 42 24, 20 30, 13 42 C 8 52, 12 62, 20 68 C 24 74, 24 82, 22 89" fill="none" stroke="#ddd6c4" stroke-width="5"/>
  <path d="M39 15 C 42 24, 20 30, 13 42 C 8 52, 12 62, 20 68 C 24 74, 24 82, 22 89" fill="none" stroke="#f6f2e6" stroke-width="3.6"/>
  <path d="M0 70 C 10 75, 20 82, 25 89" fill="none" stroke="#f3f1ea" stroke-width="2"/>
  <path d="M28 12 C 60 25, 80 35, 110 55" fill="none" stroke="#bcd8b8" stroke-width="0.8"/>
  <path d="M62 34 C 70 36, 76 37, 82 38" fill="none" stroke="#7a9a9a" stroke-width="0.8"/>
  <path d="M128 18 C 150 20, 165 35, 175 50 C 180 56, 185 60, 190 62" fill="none" stroke="#f3f1ea" stroke-width="3"/>
  <path d="M135 35 C 155 45, 170 55, 178 62" fill="none" stroke="#f3f1ea" stroke-width="2"/>
  <path d="M120 24 C 116 30, 114 36, 116 44 C 119 52, 121 58, 121 66 C 121.5 74, 122 82, 122 89" fill="none" stroke="#c0503a" stroke-width="2"/><circle cx="120" cy="24" r="2" fill="#8ab8d8"/>
  <path d="M132 25 L 150 40" stroke="#7aa8a8" stroke-width="0.8" stroke-dasharray="2 1.5"/>
  <path d="M170 40 V 89" stroke="#f3f1ea" stroke-width="1"/>
  <path d="M150 42 H 190" stroke="#f3f1ea" stroke-width="1"/>
  <ellipse cx="67" cy="26" rx="3" ry="4.5" fill="#a8cde8"/>
  <ellipse cx="181" cy="53" rx="3" ry="4" fill="#a8cde8"/>
  <circle cx="185.5" cy="84.5" r="3.5" fill="#e03a3a"/>
 </svg>
 <div class="a" style="left:1px;top:3.5px;width:8px;height:7px;background:#555"></div>
 <div class="a" style="left:11px;top:6px;width:22px;height:2px;background:#555"></div>
 <div class="a" style="left:11px;top:10px;width:55px;height:0.7px;background:#999"></div>
 <div class="a" style="left:174px;top:1px;width:4px;height:4px;border-radius:50%;background:#2a6ad0"></div>
 <div class="a" style="left:140px;top:2px;width:30px;height:1px;background:#888"></div>
 <!-- cards -->
 <div class="a" style="left:41.4px;top:36.6px;width:25.4px;height:25.7px;background:#fff"></div>
 <div class="a" style="left:41.4px;top:41.6px;width:25.4px;height:20.7px;background:linear-gradient(#2f4a2a,#6a7a5a 50%,#5a5a4a)"></div>
 <div class="a" style="left:86.3px;top:20.7px;width:25.5px;height:26.6px;background:#fff"></div>
 <div class="a" style="left:86.3px;top:25.7px;width:25.5px;height:21.6px;background:linear-gradient(#8ac0e0,#4a7a3a 45%,#3a5a3a 65%,#6a7a8a)"></div>
 <div class="a" style="left:126.1px;top:42.7px;width:25.4px;height:25.7px;background:#fff"></div>
 <div class="a" style="left:126.1px;top:48.2px;width:25.4px;height:20.2px;background:#1e3a1e"></div>
 <div class="a" style="left:133px;top:50px;width:11px;height:17px;background:#cfc7b8"></div>
 <div class="a" style="left:70.3px;top:61.7px;width:25.4px;height:24px;background:#fff"></div>
 <div class="a" style="left:70.3px;top:66.7px;width:25.4px;height:19px;background:linear-gradient(#2a3a1a,#4a6a3a)"></div>
 <div class="a" style="left:78px;top:72px;width:8px;height:8px;background:#ddd"></div>
 <div class="a" style="left:39.5px;top:70.7px;width:25.4px;height:18px;background:#fff"></div>
 <div class="a" style="left:39.5px;top:75.7px;width:25.4px;height:13px;background:#b99a3a"></div>
 <div class="a" style="left:106.5px;top:75.7px;width:25.5px;height:13px;background:#fff"></div>
 <div class="a" style="left:106.5px;top:80.7px;width:25.5px;height:8px;background:#9a9a6a"></div>
</div>

<div class="t" style="left:235.4px;top:581.7px;font-family:'Liberation Serif',serif;font-size:17.35px;color:#111">Реализация краткосрочного проекта «Путешествие моей мечты»</div>

<div class="t" style="left:362px;top:635px;font-size:9.6px;color:#8a8a8a">Recorded with <span style="color:#2b9ad0">BigBlueButton</span>.</div>

<!-- SIDEBAR TEXT -->
<div class="t" style="left:863px;top:438.4px;font-size:13px;font-weight:bold;color:#7c7c7c">Алексей Александрович</div>
<div class="t" style="left:863px;top:458.4px;font-size:13px;color:#333"><b style="color:#7c7c7c">Евтеев:</b><span style="color:#3a93bd;text-decoration:underline">https://stepik.org/course/53425/promo</span> логин:</div>
<div class="t" style="left:863px;top:477.2px;font-size:13px;color:#333">bspu.ifmcn@mail.ru парль: bspu.ifmcn</div>
<div class="t" style="left:863px;top:501.4px;font-size:13px;font-weight:bold;color:#7c7c7c">Ксения Сергеевна</div>
<div class="t" style="left:863px;top:521.5px;font-size:13px;color:#333"><b style="color:#7c7c7c">Чередниченко:</b><span style="color:#3a93bd;text-decoration:underline">https://kseniyachery673.wixsite.com/domaneskychno</span></div>

<!-- CONTROL BAR -->
<div class="a" style="left:0;top:652px;width:1280px;height:29px;background:#292c34"></div>
<div class="a" style="left:15px;top:657px;width:5px;height:15px;background:#a9a9a9"></div>
<div class="a" style="left:25px;top:657px;width:5px;height:15px;background:#a9a9a9"></div>
<div class="a" style="left:49px;top:661px;width:727px;height:11px;background:#2a9bd8"></div>
<div class="a" style="left:776px;top:661px;width:142.5px;height:11px;background:#8a9aad"></div>
<div class="a" style="left:771.5px;top:659px;width:9px;height:14.5px;background:#fff;border-radius:3px;box-shadow:0 0 5px 1px rgba(42,155,216,.7)"></div>
<div class="t" style="left:928.5px;top:658.6px;font-size:12.6px;letter-spacing:-0.5px;font-weight:bold;color:#fff">117:54</div>

<!-- control icons -->
<svg class="a" style="left:1188px;top:657px" width="15" height="15" viewBox="0 0 15 15"><g fill="#bdbdbd"><path d="M0 0h5.5L4 1.5 6.5 4 4 6.5 1.5 4 0 5.5z"/><path d="M15 0v5.5L13.5 4 11 6.5 8.5 4 11 1.5 9.5 0z"/><path d="M0 15v-5.5L1.5 11 4 8.5 6.5 11 4 13.5 5.5 15z"/><path d="M15 15h-5.5L11 13.5 8.5 11 11 8.5 13.5 11 15 9.5z"/></g></svg>
<svg class="a" style="left:1222.5px;top:659px" width="16" height="13" viewBox="0 0 16 13"><g fill="#bdbdbd"><path d="M0 3L5 0V2H14V4H5V6z"/><path d="M16 10L11 7V9H2V11H11V13z"/></g></svg>
<svg class="a" style="left:1252.5px;top:659px" width="16" height="16" viewBox="0 0 16 16"><path d="M0 5H3.5L8 1V15L3.5 11H0z" fill="#bdbdbd"/><path d="M10.5 5.5a3 3 0 0 1 0 5M12 3.5a5.5 5.5 0 0 1 0 9" fill="none" stroke="#8a8a8a" stroke-width="0.9"/></svg>

<!-- TASKBAR -->
<div class="a" style="left:0;top:681px;width:1280px;height:38px;background:#1f201d"></div>
<svg class="a" style="left:15px;top:693px" width="16" height="16" viewBox="0 0 16 16"><g fill="#fff"><path d="M0 2.3L6.6 1.4V7.6H0z"/><path d="M7.4 1.3L16 0V7.6H7.4z"/><path d="M0 8.4H6.6V14.6L0 13.7z"/><path d="M7.4 8.4H16V16L7.4 14.8z"/></g></svg>
<div class="a" style="left:45px;top:681.5px;width:322.5px;height:37.5px;background:#f0f0f0"></div>
<svg class="a" style="left:55px;top:692px" width="17" height="17" viewBox="0 0 17 17"><circle cx="10.3" cy="6.7" r="4.7" fill="none" stroke="#222" stroke-width="1.3"/><path d="M7 10L1 16" stroke="#222" stroke-width="1.4"/></svg>
<div class="t" style="left:83px;top:693.6px;font-size:14.5px;letter-spacing:-0.45px;color:#3d3d3d">Введите здесь текст для поиска</div>
<!-- task view -->
<svg class="a" style="left:381px;top:692px" width="18" height="16" viewBox="0 0 18 16"><g fill="none" stroke="#e8e8e8" stroke-width="1.2"><path d="M1 1.5H11M1 14.5H11M2.5 4V12M9.5 4V12M2.5 4H9.5M2.5 12H9.5"/><path d="M15 1V5M15 10.5V15"/></g><rect x="13.7" y="6" width="2.6" height="3.5" fill="#e8e8e8"/></svg>
<!-- mail -->
<svg class="a" style="left:426px;top:689.5px" width="23" height="21" viewBox="0 0 23 21"><path d="M0 8L11.5 0L23 8V21H0z" fill="#0f6fc6"/><path d="M2.5 7H20.5V14H2.5z" fill="#fff"/><path d="M0 8L11.5 15L23 8V21H0z" fill="#3aa0e8"/><path d="M0 21L11.5 13L23 21z" fill="#2e8fde"/></svg>
<!-- folder -->
<svg class="a" style="left:473px;top:691.5px" width="21" height="18" viewBox="0 0 21 18"><path d="M0 1.5H7L9 3.5H21V17H0z" fill="#e8a820"/><path d="M0 5H21V17H0z" fill="#f8d05a"/><path d="M5 9.5H16V17H13V12H8V17H5z" fill="#2a80d0"/></svg>
<!-- yandex -->
<svg class="a" style="left:518.5px;top:690px" width="22" height="21" viewBox="0 0 22 21"><path d="M1.5 0H15L21.5 10.5L15 21H1.5a1.5 1.5 0 0 1-1.5-1.5V1.5A1.5 1.5 0 0 1 1.5 0z" fill="#f4f4f4"/><path d="M11.5 3.5V17.5M11.5 3.5H9.5a3.3 3.3 0 0 0 0 6.6H11.5M9.5 10.1L6.5 17.5" fill="none" stroke="#e52620" stroke-width="1.8"/></svg>
<!-- tablet -->
<svg class="a" style="left:565px;top:690px" width="21" height="21" viewBox="0 0 21 21"><g fill="none" stroke="#f0f0f0" stroke-width="1.4"><path d="M1.5 5.5L16 2V11"/><path d="M1.5 5.5V18L5 17.3"/></g><g fill="#f0f0f0"><path d="M7 12.5L13 11.5V14.5L7 15.5z"/><path d="M14 11.3L20 10.3V13.3L14 14.3z"/><path d="M7 16.5L13 15.5V20L7 21z"/><path d="M14 15.3L20 14.3V19L14 20z"/></g></svg>
<!-- word -->
<svg class="a" style="left:610px;top:689px" width="21" height="21" viewBox="0 0 21 21"><rect x="0" y="0" width="19" height="19" fill="#dde6f2"/><rect x="0" y="0" width="19" height="19" fill="none" stroke="#bcc9dc" stroke-width="0.8"/><path d="M2 4L4.5 14.5L7 7L9.5 14.5L12 4" fill="none" stroke="#1d5fc6" stroke-width="2.4"/><rect x="12" y="8" width="6" height="1.2" fill="#7a9ad0"/><rect x="12" y="11" width="6" height="1.2" fill="#7a9ad0"/><path d="M14 14L21 21H14z" fill="#fff"/></svg>
<!-- chrome highlighted -->
<div class="a" style="left:645.5px;top:681px;width:40.5px;height:38px;background:#464646"></div>
<div class="a" style="left:645.5px;top:716.5px;width:40.5px;height:2.5px;background:#7fb9ea"></div>
<svg class="a" style="left:656.5px;top:689.8px" width="21" height="21" viewBox="0 0 21 21">
 <path d="M10.5 10.5L1.4 5.25A10.5 10.5 0 0 1 19.6 5.25z" fill="#db4437"/>
 <path d="M10.5 10.5L19.6 5.25A10.5 10.5 0 0 1 10.5 21z" fill="#f4c20d"/>
 <path d="M10.5 10.5L10.5 21A10.5 10.5 0 0 1 1.4 5.25z" fill="#0f9d58"/>
 <circle cx="10.5" cy="10.5" r="4.8" fill="#fff"/><circle cx="10.5" cy="10.5" r="3.8" fill="#4285f4"/>
</svg>
<div class="a" style="left:688px;top:681px;width:1px;height:38px;background:#2b2b2b"></div>
<!-- whatsapp -->
<div class="a" style="left:693.5px;top:716.5px;width:39px;height:2.5px;background:#7fb9ea"></div>
<svg class="a" style="left:702.5px;top:689.5px" width="28" height="24" viewBox="0 0 28 24"><path d="M11 0.5a10 10 0 1 0 0 20a10 10 0 0 0 5-1.3L21 20.5L19.5 16A10 10 0 0 0 11 0.5z" fill="#e8f5ea"/><path d="M11 1.6a8.9 8.9 0 0 0-7.6 13.6L2.3 19.4L6.6 18.3A8.9 8.9 0 1 0 11 1.6z" fill="#30b84a"/><path d="M7 6c0 4.2 3.3 8 7.5 8.5l1.2-1.6-2-1.2-1 0.9c-1.5-0.6-2.7-1.8-3.3-3.3l0.9-1-1-2.1z" fill="#fff"/></svg>
<div class="a" style="left:711px;top:698px;width:15.5px;height:15.5px;border-radius:50%;background:#e8141a"></div>
<div class="t" style="left:711px;top:700.5px;width:15.5px;text-align:center;font-size:11.5px;font-weight:bold;color:#fff">2</div>
<!-- tray -->
<svg class="a" style="left:1016px;top:696px" width="13" height="8" viewBox="0 0 13 8"><path d="M1 7L6.5 1.5L12 7" fill="none" stroke="#e8e8e8" stroke-width="1.2"/></svg>
<svg class="a" style="left:1045px;top:696.5px" width="16" height="9" viewBox="0 0 16 9"><rect x="0.6" y="0.6" width="13" height="7.5" fill="none" stroke="#e8e8e8" stroke-width="1.1"/><rect x="2" y="2" width="5" height="4.6" fill="#e8e8e8"/><rect x="14" y="3" width="1.8" height="3" fill="#e8e8e8"/></svg>
<svg class="a" style="left:1074px;top:693.5px" width="17" height="14" viewBox="0 0 17 14"><path d="M0.7 4.5H3.5L7 1.2V12.8L3.5 9.5H0.7z" fill="none" stroke="#e8e8e8" stroke-width="1.1"/><path d="M9.5 4.5a3 3 0 0 1 0 5M11.7 2.8a5.5 5.5 0 0 1 0 8.4M14 1a8 8 0 0 1 0 12" fill="none" stroke="#e8e8e8" stroke-width="1.1"/></svg>
<svg class="a" style="left:1107.5px;top:694px" width="16" height="12" viewBox="0 0 16 12"><rect x="0.6" y="0.6" width="14.8" height="10.8" fill="none" stroke="#e8e8e8" stroke-width="1.1"/><path d="M0.6 6.5H15.4M8 6.5V11.4" stroke="#e8e8e8" stroke-width="1.1"/></svg>
<div class="t" style="left:1140.5px;top:693.8px;font-size:11.6px;letter-spacing:-0.55px;color:#eee">ENG</div>
<div class="t" style="left:1187px;top:686px;font-size:11.2px;letter-spacing:-0.45px;color:#eee">15:23</div>
<div class="t" style="left:1174px;top:703px;font-size:11.2px;letter-spacing:-0.4px;color:#eee">28.06.2020</div>
<svg class="a" style="left:1241px;top:692px" width="17" height="19" viewBox="0 0 17 19"><path d="M0 0H17V14H11L8.5 18L6 14H0z" fill="#fff"/><path d="M3 3.5H14M3 6.5H14M3 9.5H11" stroke="#1f201d" stroke-width="1.2"/></svg>
<div class="a" style="left:1275px;top:681px;width:1px;height:38px;background:#555"></div>
</body></html>
